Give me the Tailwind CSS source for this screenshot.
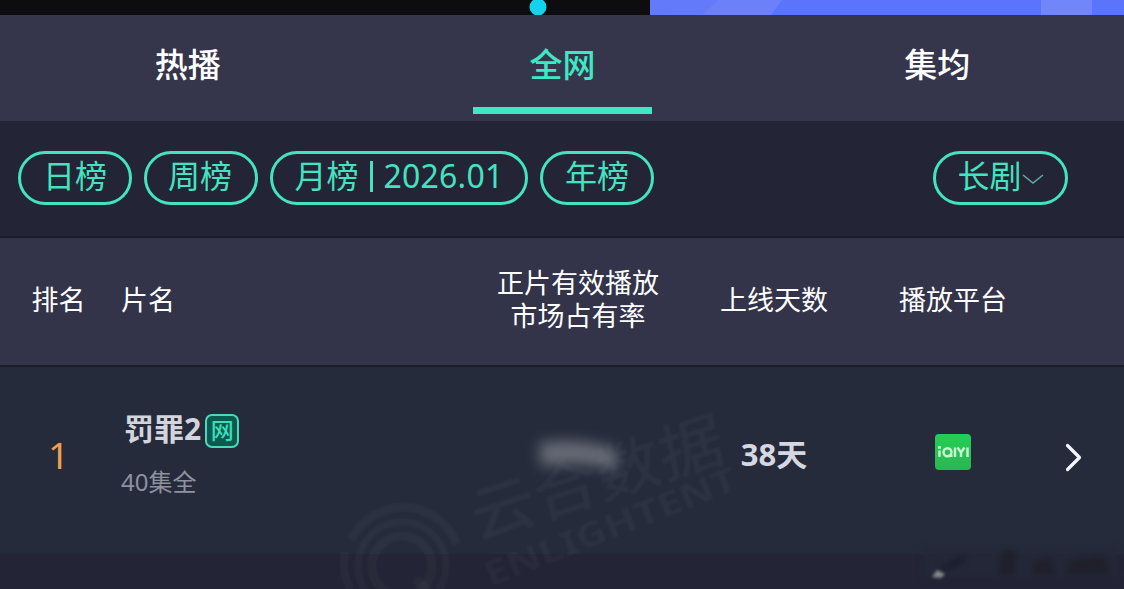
<!DOCTYPE html>
<html lang="zh-CN">
<head>
    <meta charset="UTF-8">
    <meta name="viewport" content="width=device-width, initial-scale=1.0">
    <title>全网榜</title>
    <script src="https://cdn.jsdelivr.net/npm/@tailwindcss/browser@4"></script>
</head>
<body class="bg-[#232435] font-['Noto_Sans','Noto_Sans_CJK_SC',sans-serif] text-white overflow-hidden">

    <div class="relative w-[1124px] h-[589px] overflow-hidden flex flex-col">

        <!-- Banner edge -->
        <div class="h-[15px] shrink-0 flex bg-[#0d0d0f]">
            <svg class="w-[650px] h-[15px]" viewBox="0 0 650 15">
                <circle cx="538" cy="7" r="8.5" fill="#13d4ec" />
            </svg>
            <svg class="w-[474px] h-[15px]" viewBox="0 0 474 15">
                <rect width="474" height="15" fill="#5b74fc" />
                <path d="M0 0H68L52 15H0Z" fill="#637bfa" />
                <path d="M68 0H132L121 15H52Z" fill="#6c80f9" />
                <rect x="391" width="51" height="15" fill="#7186fb" />
            </svg>
        </div>

        <!-- Tabs -->
        <nav class="h-[106px] shrink-0 grid grid-cols-3 bg-[#35364c] text-center text-[33px] leading-[48px] font-medium">
            <a href="#" class="pt-[26px] pl-px">热播</a>
            <a href="#" class="pt-[26px] pl-px flex flex-col items-center text-[#3fe8c4]">
                全网
                <span class="mt-[18px] w-[179px] h-[7px] bg-[#3fe8c4]"></span>
            </a>
            <a href="#" class="pt-[26px] pl-px">集均</a>
        </nav>

        <!-- Filters -->
        <div class="h-[115px] shrink-0 flex items-start gap-3 pt-[30px] pl-[18px] pr-14 text-[32px] leading-[42px] text-center text-[#45e2c0]">
            <button class="w-[114px] h-[54px] pb-1 border-3 border-[#45e2c0] rounded-full">日榜</button>
            <button class="w-[114px] h-[54px] pb-1 pr-0.5 border-3 border-[#45e2c0] rounded-full">周榜</button>
            <button class="w-[258px] h-[54px] pb-1 border-3 border-[#45e2c0] rounded-full flex items-center justify-center whitespace-nowrap">
                <span>月榜</span>
                <span class="w-[3px] h-[31px] bg-[#45e2c0] mx-[11px]"></span>
                <span class="tracking-[.2px]">2026.01</span>
            </button>
            <button class="w-[114px] h-[54px] pb-1 border-3 border-[#45e2c0] rounded-full">年榜</button>
            <button class="ml-auto w-[135px] h-[54px] pb-1 border-3 border-[#45e2c0] rounded-full flex items-center justify-center">
                长剧
                <svg class="w-[22px] h-3 mt-1.5" viewBox="0 0 22 12" fill="none" stroke="#5fae9f" stroke-width="1.6">
                    <path d="M1 2L11 10L21 2" />
                </svg>
            </button>
        </div>

        <!-- Table head -->
        <div class="h-[131px] shrink-0 border-y-2 border-[#1b1c2c] bg-[#33344a] grid grid-cols-[117px_363px_196px_196px_162px] items-center pb-1 text-[27px] leading-[33px] text-center">
            <div>排名</div>
            <div class="text-left pl-1">片名</div>
            <div class="pb-0.5">正片有效播放<br>市场占有率</div>
            <div>上线天数</div>
            <div>播放平台</div>
        </div>

        <!-- Row -->
        <div class="h-[187px] shrink-0 bg-[#262b3b] grid grid-cols-[117px_363px_196px_196px_162px_78px] text-center">
            <div class="pt-[61px] text-[37px] leading-[54px] text-[#ef9f4e]">1</div>
            <div class="text-left pl-1 pt-[41px]">
                <div class="flex items-center pl-[3px] text-[30px] leading-[42px] font-bold text-[#d3d4dc]">
                    罚罪2
                    <span class="ml-1 mt-1 w-[34px] h-[34px] rounded-[7px] border-2 border-[#4fd8b8] bg-[#0b5a50] text-[#3fdcb8] text-[23px] leading-[29px] font-medium text-center">网</span>
                </div>
                <div class="mt-[11px] text-[24px] leading-[42px] text-[#8e919e]">40集全</div>
            </div>
            <div class="pt-[70px] flex justify-center items-start">
                <svg class="w-[110px] h-[64px] -mt-4" viewBox="0 0 110 64">
                    <path d="M16 22Q54 16 92 28L95 50Q56 38 18 46Z" fill="#737781" class="blur-[7px] opacity-85" />
                </svg>
            </div>
            <div class="pt-[66px] text-[31px] leading-[42px] font-bold text-[#d6d7e0]">38天</div>
            <div class="pt-[67px] flex justify-center items-start">
                <div class="w-9 h-9 rounded-[4px] bg-linear-to-b from-[#23ce55] to-[#2bb652] flex items-center justify-center">
                    <svg class="w-8 h-[14px]" viewBox="0 0 32 14" fill="none" stroke="#c9f7d2" stroke-width="2.4">
                        <path d="M2.5 5.5V12M1 2.5H4M18 2.5V12M20.5 2.5L24 7.5L27.5 2.5M24 7V12M30.5 2.5V12" />
                        <circle cx="10.5" cy="7.2" r="4" />
                        <path d="M11 10.8H15.5" />
                    </svg>
                </div>
            </div>
            <div class="pt-[74px] flex justify-center items-start">
                <svg class="w-[20px] h-[32px]" viewBox="0 0 20 32" fill="none" stroke="#f4f4fa" stroke-width="3.2" stroke-linecap="round" stroke-linejoin="round">
                    <path d="M4.5 4.5L16.5 16.5L4.5 28.5" />
                </svg>
            </div>
        </div>

        <!-- Watermark -->
        <svg class="absolute left-0 top-0 w-[1124px] h-[589px] pointer-events-none" viewBox="0 0 1124 589">
            <g fill="none" stroke="#8d93a0" stroke-opacity=".06" class="blur-[1.2px]">
                <circle cx="402" cy="566" r="30" stroke-width="9" />
                <circle cx="402" cy="566" r="44" stroke-width="7" />
                <path d="M351 540A58 58 0 0 1 457 544" stroke-width="9" />
                <path d="M345 552Q341 571 350 589" stroke-width="8" />
                <path d="M415 579L430 592" stroke-width="9" />
            </g>
            <g fill="#8d93a0" fill-opacity=".065" class="blur-[1px]">
                <text transform="translate(476 541) rotate(-18) skewX(-6)" font-size="62" font-weight="500" textLength="264" lengthAdjust="spacingAndGlyphs">云合数据</text>
                <text transform="translate(490 587) rotate(-21.5)" font-size="34" font-weight="700" textLength="268" lengthAdjust="spacingAndGlyphs">ENLIGHTENT</text>
            </g>
            <!-- Smudged caption in the corner -->
            <g class="blur-[3px]">
                <path d="M922 548H1118V578H922Z" fill="#232838" fill-opacity=".8" />
                <path d="M940 567L968 553L962 564L945 571Z" fill="#1b1d28" />
                <path d="M1002 550H1016V575H998ZM1034 562L1050 556L1056 575H1032ZM1070 560L1104 555L1110 575H1066Z" fill="#1f202b" />
            </g>
            <path d="M932 577L937 570L945 574L941 578Z" fill="#83868b" class="blur-[1.5px]" />
        </svg>
    </div>

</body>
</html>
